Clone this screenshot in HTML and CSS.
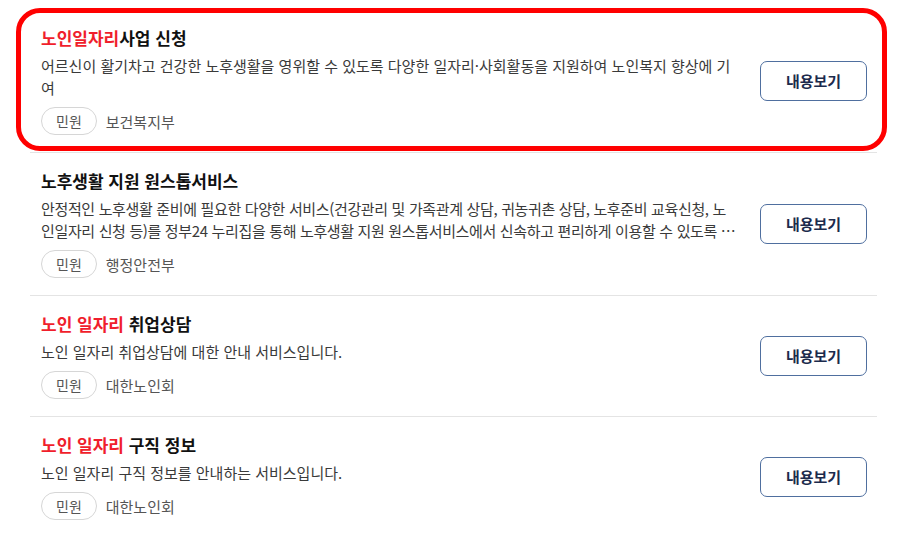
FILE: index.html
```html
<!DOCTYPE html>
<html lang="ko">
<head>
    <meta charset="UTF-8">
    <meta name="viewport" content="width=device-width, initial-scale=1.0">
    <title>노인일자리 서비스 검색결과</title>
    <link rel="stylesheet" href="styles.css">
</head>
<body>
<main>
    <ul class="result-list">
        <li class="result-item highlight">
            <div class="result-body">
                <h3 class="result-title"><em>노인일자리</em>사업 신청</h3>
                <p class="result-desc">어르신이 활기차고 건강한 노후생활을 영위할 수 있도록 다양한 일자리·사회활동을 지원하여 노인복지 향상에 기여</p>
                <div class="result-meta">
                    <span class="tag">민원</span>
                    <span class="org">보건복지부</span>
                </div>
            </div>
            <button class="view-button">내용보기</button>
        </li>
        <li class="result-item">
            <div class="result-body">
                <h3 class="result-title">노후생활 지원 원스톱서비스</h3>
                <p class="result-desc tight">안정적인 노후생활 준비에 필요한 다양한 서비스(건강관리 및 가족관계 상담, 귀농귀촌 상담, 노후준비 교육신청, 노인일자리 신청 등)를 정부24 누리집을 통해 노후생활 지원 원스톱서비스에서 신속하고 편리하게 이용할 수 있도록 제공하는 서비스입니다.</p>
                <div class="result-meta">
                    <span class="tag">민원</span>
                    <span class="org">행정안전부</span>
                </div>
            </div>
            <button class="view-button">내용보기</button>
        </li>
        <li class="result-item">
            <div class="result-body">
                <h3 class="result-title"><em>노인 일자리</em> 취업상담</h3>
                <p class="result-desc">노인 일자리 취업상담에 대한 안내 서비스입니다.</p>
                <div class="result-meta">
                    <span class="tag">민원</span>
                    <span class="org">대한노인회</span>
                </div>
            </div>
            <button class="view-button">내용보기</button>
        </li>
        <li class="result-item">
            <div class="result-body">
                <h3 class="result-title"><em>노인 일자리</em> 구직 정보</h3>
                <p class="result-desc">노인 일자리 구직 정보를 안내하는 서비스입니다.</p>
                <div class="result-meta">
                    <span class="tag">민원</span>
                    <span class="org">대한노인회</span>
                </div>
            </div>
            <button class="view-button">내용보기</button>
        </li>
    </ul>
</main>
</body>
</html>
```

FILE: styles.css
```css
body {
    font-family: 'Noto Sans CJK KR', 'Noto Sans', sans-serif;
    margin: 0;
    padding: 0;
    background: #fff;
    color: #222;
}

main {
    padding: 10px 26px 0 30px;
}

.result-list {
    list-style: none;
    margin: 0;
    padding: 0;
}

.result-item {
    position: relative;
    display: flex;
    align-items: center;
    gap: 24px;
    padding: 16px 10px 17px 11px;
    border-bottom: 1px solid #e4e4e4;
}

.result-item:last-child {
    border-bottom: none;
}

/* red highlight box around the first result */
.result-item.highlight::after {
    content: "";
    position: absolute;
    top: -2px;
    bottom: 1px;
    left: -14px;
    right: -10px;
    border: 5px solid #ff0000;
    border-radius: 24px;
    pointer-events: none;
}

.result-body {
    flex: 1;
    min-width: 0;
}

.result-title {
    margin: 0;
    font-size: 17px;
    line-height: 24px;
    font-weight: bold;
    color: #111;
}

.result-title em {
    font-style: normal;
    color: #f01e2c;
}

.result-desc {
    margin: 5px 0 0;
    font-size: 15px;
    line-height: 22px;
    color: #3a3a3a;
    word-break: break-all;
    display: -webkit-box;
    -webkit-line-clamp: 2;
    -webkit-box-orient: vertical;
    overflow: hidden;
}

.result-desc.tight {
    letter-spacing: -0.35px;
}

.result-meta {
    display: flex;
    align-items: center;
    gap: 9px;
    margin-top: 8px;
}

.tag {
    display: inline-flex;
    align-items: center;
    height: 26px;
    padding: 0 14px;
    border: 1px solid #d6d6d6;
    border-radius: 14px;
    font-size: 14px;
    color: #555;
}

.org {
    font-size: 15px;
    color: #555;
}

.view-button {
    flex-shrink: 0;
    width: 107px;
    height: 40px;
    background: #fff;
    border: 1px solid #4f6f9f;
    border-radius: 7px;
    font-family: inherit;
    font-size: 15px;
    font-weight: bold;
    color: #1c2b4d;
    cursor: pointer;
}
```
